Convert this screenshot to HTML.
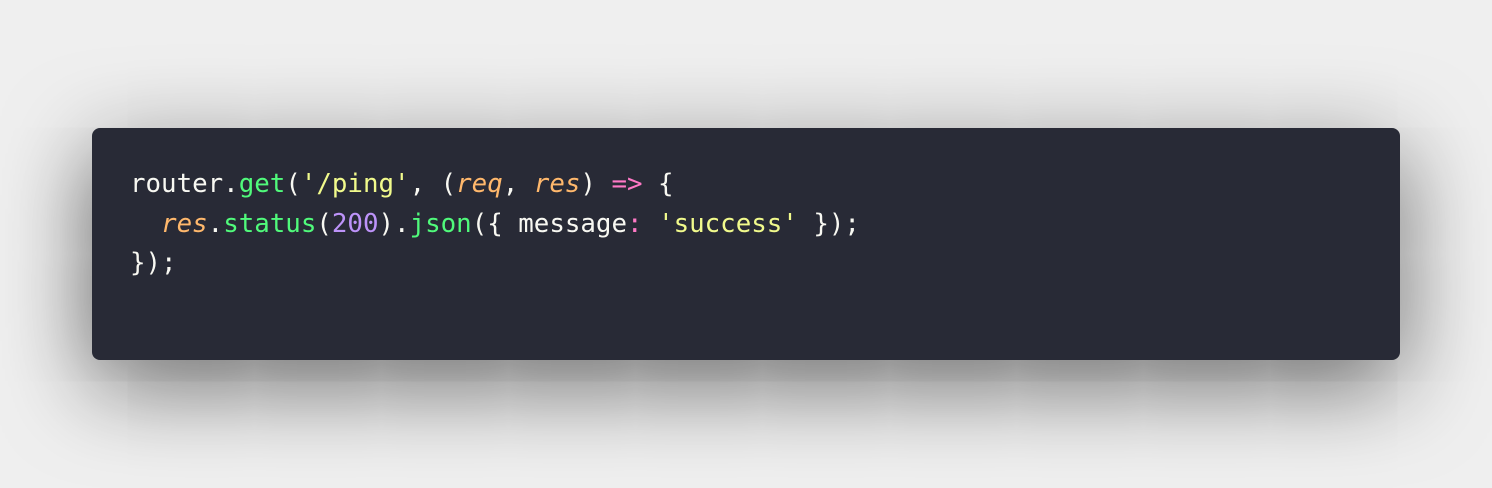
<!DOCTYPE html>
<html><head><style>
html,body{margin:0;padding:0;}
body{width:1492px;height:488px;background:#efefef;position:relative;overflow:hidden;}
.card{position:absolute;left:92px;top:128px;width:1308px;height:232px;background:#282a36;border-radius:8px;box-shadow:0 24px 90px rgba(0,0,0,0.6);}
pre{margin:0;position:absolute;left:130px;top:165px;font-family:"DejaVu Sans Mono","Liberation Mono",monospace;font-size:25.8px;line-height:39.5px;color:#f8f8f2;}
.g{color:#50fa7b}.y{color:#f1fa8c}.o{color:#ffb86c;font-style:italic}.p{color:#ff79c6}.v{color:#bd93f9}
</style></head><body>
<div class="card"></div>
<pre>router.<span class="g">get</span>(<span class="y">'/ping'</span>, (<span class="o">req</span>, <span class="o">res</span>) <span class="p">=&gt;</span> {
  <span class="o">res</span>.<span class="g">status</span>(<span class="v">200</span>).<span class="g">json</span>({ message<span class="p">:</span> <span class="y">'success'</span> });
});</pre>
</body></html>
